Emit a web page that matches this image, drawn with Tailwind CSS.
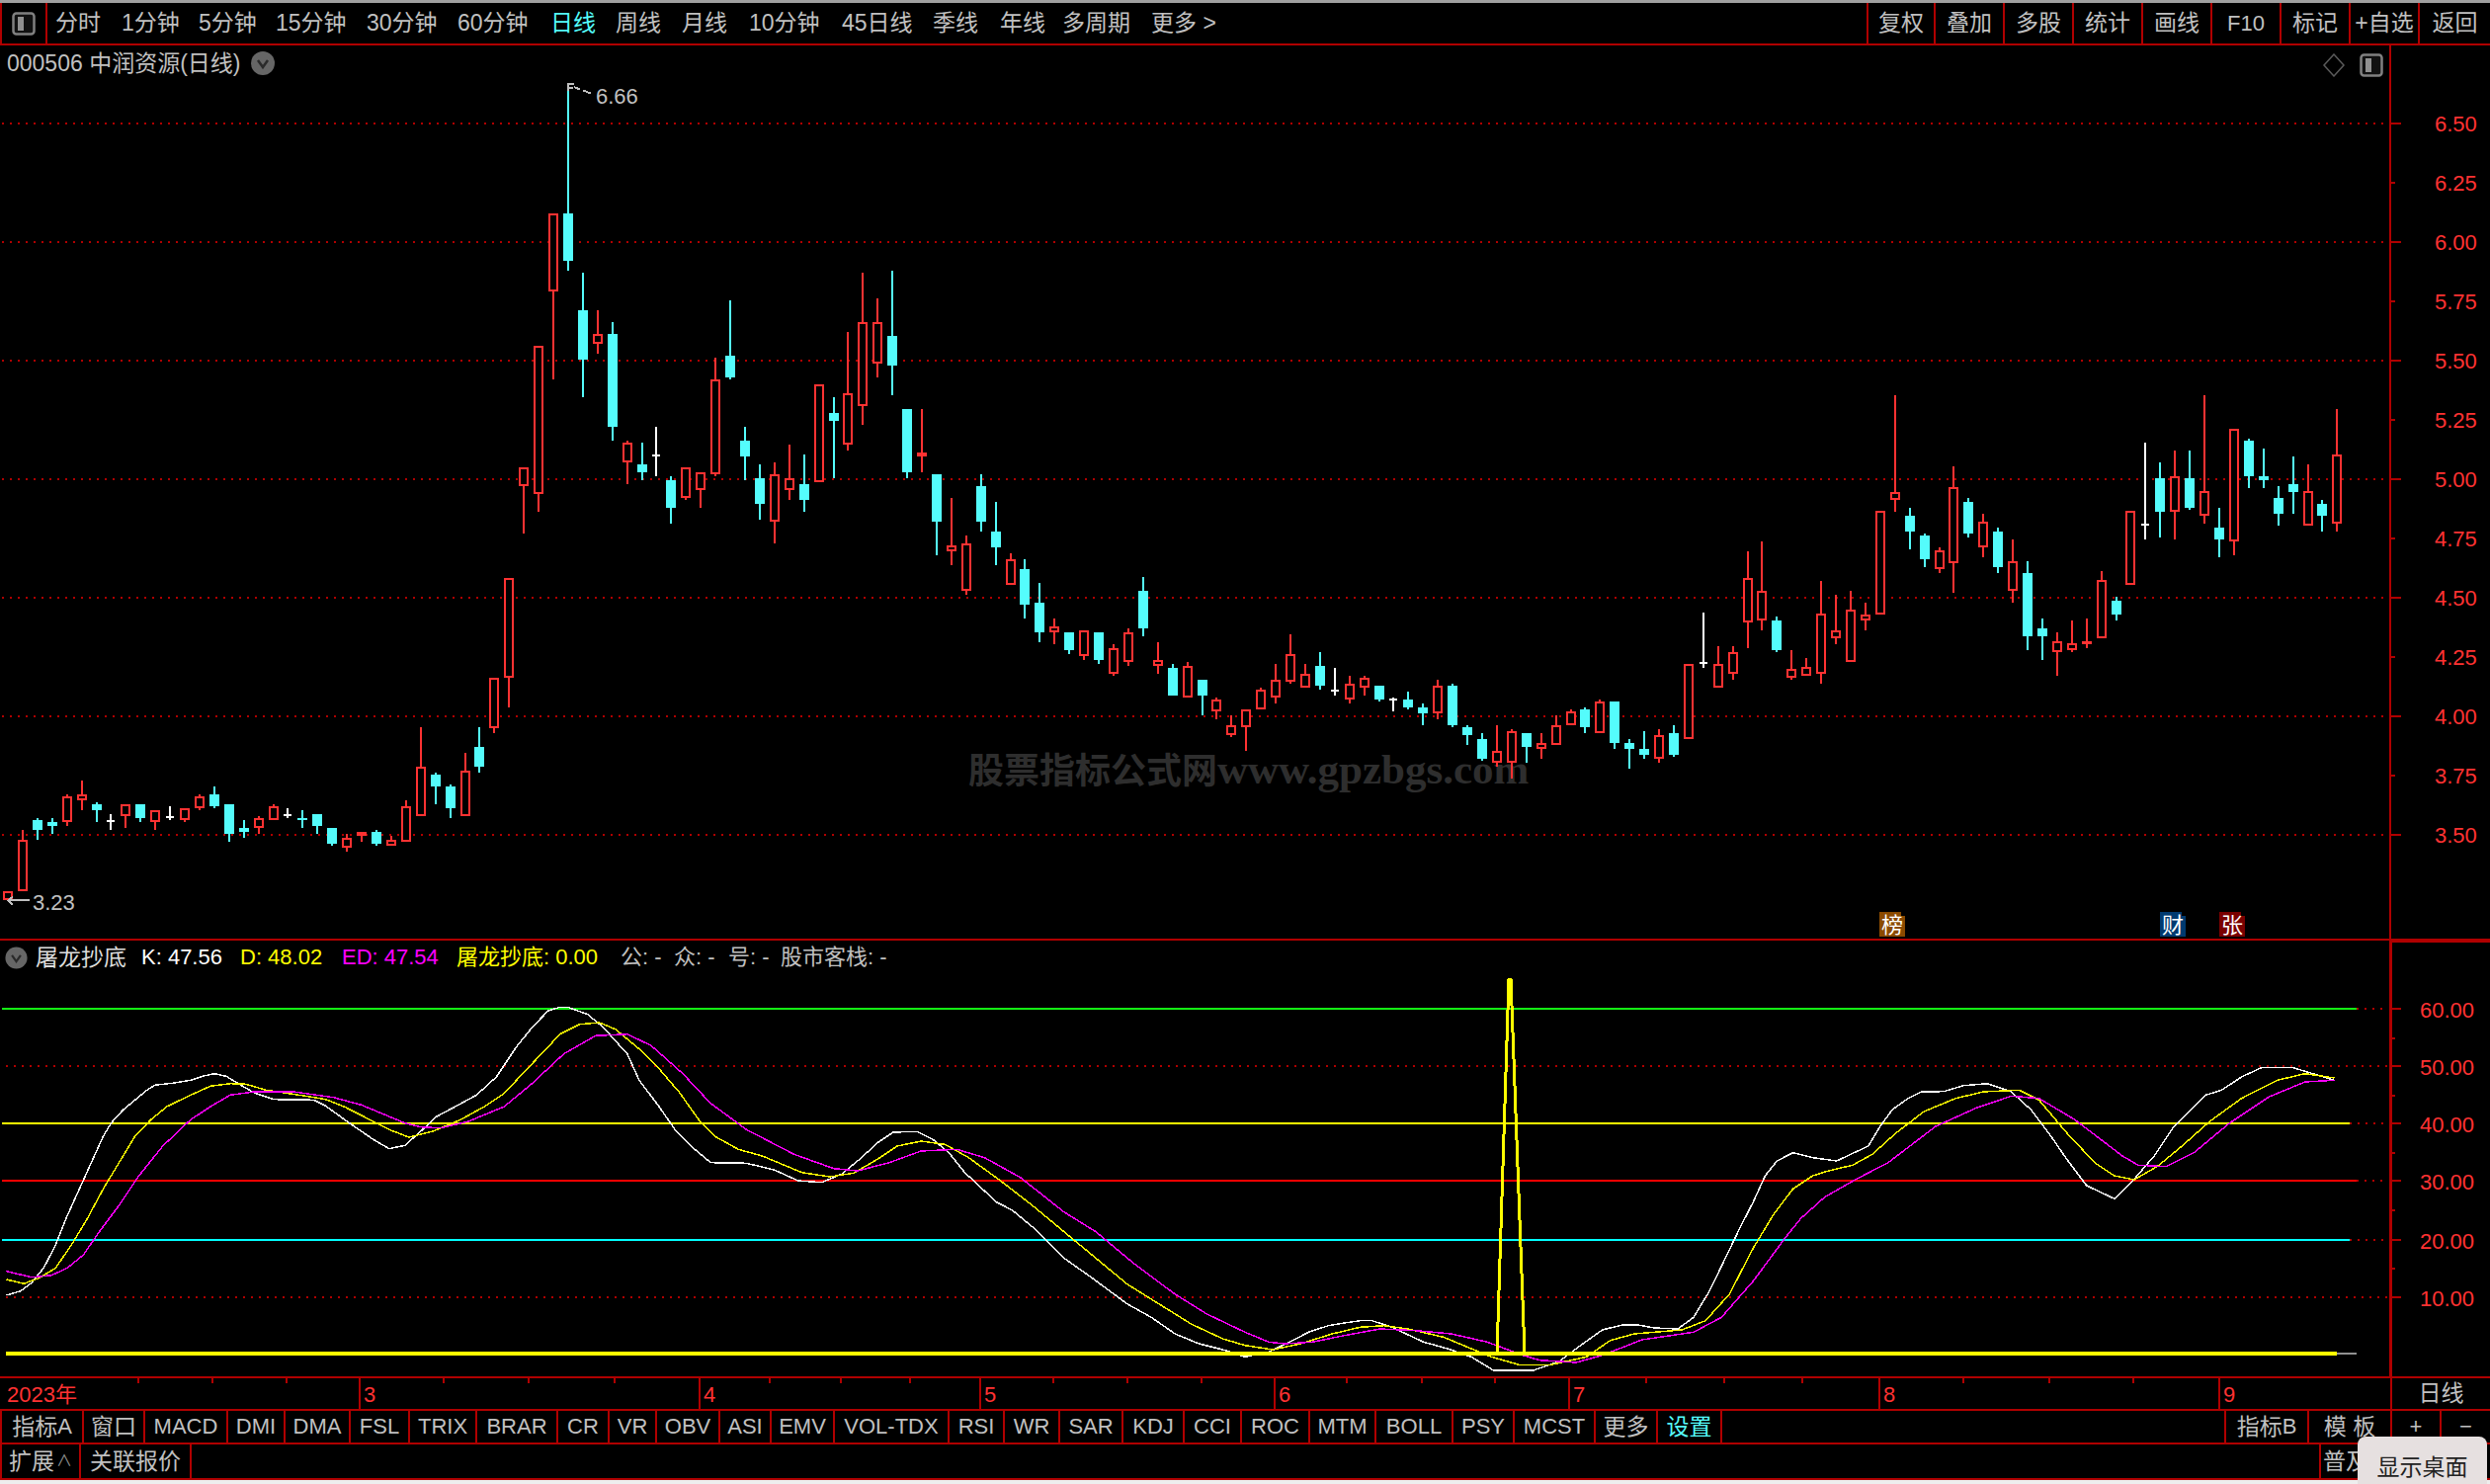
<!DOCTYPE html>
<html lang="zh-CN">
<head>
    <meta charset="UTF-8">
    <title>000506 中润资源 日线</title>
    <script src="https://cdn.jsdelivr.net/npm/@tailwindcss/browser@4"></script>
</head>
<body class="w-[2520px] h-[1502px] overflow-hidden flex flex-col bg-[#eeeeee] text-[#c0c0c0] text-[23px] leading-none font-['Liberation_Sans','Noto_Sans_CJK_SC',sans-serif]">
    <div class="h-[3px] bg-[#a0a0a0]"></div>

    <!-- top toolbar -->
    <div class="h-[43px] shrink-0 flex items-center bg-black border-b-2 border-[#b00000] whitespace-nowrap">
        <div class="w-[48px] h-full border-x-2 border-[#b00000] flex items-center justify-center">
            <svg width="24" height="24" viewBox="0 0 24 24"><rect x="1.5" y="1.5" width="21" height="21" rx="3" fill="#111" stroke="#808080" stroke-width="2.5"/><rect x="6" y="5" width="6" height="14" fill="#909090"/></svg>
        </div>
        <div class="w-[8px]"></div>
        <div class="w-[67px]">分时</div>
        <div class="w-[78px]">1分钟</div>
        <div class="w-[78px]">5分钟</div>
        <div class="w-[92px]">15分钟</div>
        <div class="w-[92px]">30分钟</div>
        <div class="w-[94px]">60分钟</div>
        <div class="w-[66px] text-[#54fcfc]">日线</div>
        <div class="w-[67px]">周线</div>
        <div class="w-[68px]">月线</div>
        <div class="w-[94px]">10分钟</div>
        <div class="w-[92px]">45日线</div>
        <div class="w-[68px]">季线</div>
        <div class="w-[63px]">年线</div>
        <div class="w-[90px]">多周期</div>
        <div class="w-[69px]">更多 &gt;</div>
        <div class="flex-1"></div>
        <div class="w-[68px] h-full flex items-center justify-center border-l-2 border-[#b00000]">复权</div>
        <div class="w-[70px] h-full flex items-center justify-center border-l-2 border-[#b00000]">叠加</div>
        <div class="w-[70px] h-full flex items-center justify-center border-l-2 border-[#b00000]">多股</div>
        <div class="w-[70px] h-full flex items-center justify-center border-l-2 border-[#b00000]">统计</div>
        <div class="w-[70px] h-full flex items-center justify-center border-l-2 border-[#b00000]">画线</div>
        <div class="w-[70px] h-full flex items-center justify-center border-l-2 border-[#b00000] text-[22px]">F10</div>
        <div class="w-[70px] h-full flex items-center justify-center border-l-2 border-[#b00000]">标记</div>
        <div class="w-[70px] h-full flex items-center justify-center border-l-2 border-[#b00000]">+自选</div>
        <div class="w-[73px] h-full flex items-center justify-center border-l-2 border-[#b00000]">返回</div>
    </div>

    <!-- price panel -->
    <div class="relative h-[904px] shrink-0 bg-black">
        <svg id="priceChart" class="block" width="2520" height="904" viewBox="0 46 2520 904" shape-rendering="crispEdges"></svg>
        <div class="absolute left-[7px] top-[5px] flex items-center gap-[10px] h-[26px] whitespace-nowrap">
            <span>000506 中润资源(日线)</span>
            <svg width="26" height="26" viewBox="0 0 26 26"><circle cx="13" cy="13" r="12" fill="#666"/><path d="M8 10l5 7 5-7" fill="none" stroke="#2a2a2a" stroke-width="2.5"/></svg>
        </div>
        <div class="absolute right-[108px] top-[8px] flex items-center gap-[14px]">
            <svg width="24" height="24" viewBox="0 0 24 24"><path d="M12 1l10 11-10 11L2 12z" fill="none" stroke="#5a5a5a" stroke-width="1.5"/></svg>
            <svg width="24" height="24" viewBox="0 0 24 24"><rect x="1.5" y="1.5" width="21" height="21" rx="3" fill="#111" stroke="#808080" stroke-width="2.5"/><rect x="6" y="5" width="6" height="14" fill="#909090"/></svg>
        </div>
    </div>
    <div class="h-[2px] shrink-0 bg-[#b00000]"></div>

    <!-- indicator panel -->
    <div class="relative h-[441px] shrink-0 bg-black">
        <svg id="kdjChart" class="block" width="2520" height="441" viewBox="0 952 2520 441" shape-rendering="crispEdges"></svg>
        <div class="absolute left-0 top-[5px] flex items-center h-[24px] whitespace-nowrap text-[22px]">
            <div class="w-[36px] pl-[5px]"><svg width="23" height="23" viewBox="0 0 26 26"><circle cx="13" cy="13" r="12.5" fill="#666"/><path d="M8 10l5 7 5-7" fill="none" stroke="#2a2a2a" stroke-width="2.5"/></svg></div>
            <div class="w-[107px] text-[23px] text-[#dddddd]">屠龙抄底</div>
            <div class="w-[100px] text-white">K: 47.56</div>
            <div class="w-[103px] text-[#ffff00]">D: 48.02</div>
            <div class="w-[116px] text-[#ff00ff]">ED: 47.54</div>
            <div class="w-[166px] text-[#ffff00]">屠龙抄底: 0.00</div>
            <div class="w-[54px]">公: -</div>
            <div class="w-[55px]">众: -</div>
            <div class="w-[53px]">号: -</div>
            <div>股市客栈: -</div>
        </div>
    </div>
    <div class="h-[2px] shrink-0 bg-[#b00000]"></div>

    <!-- date axis -->
    <div class="relative h-[31px] shrink-0 flex bg-black text-[#ff3232] text-[22px]">
        <div class="w-[363px] pl-[7px] pt-[6px]">2023年</div>
        <div class="w-[344px] border-l-2 border-[#b00000] pl-[3px] pt-[6px]">3</div>
        <div class="w-[284px] border-l-2 border-[#b00000] pl-[3px] pt-[6px]">4</div>
        <div class="w-[298px] border-l-2 border-[#b00000] pl-[3px] pt-[6px]">5</div>
        <div class="w-[298px] border-l-2 border-[#b00000] pl-[3px] pt-[6px]">6</div>
        <div class="w-[314px] border-l-2 border-[#b00000] pl-[3px] pt-[6px]">7</div>
        <div class="w-[344px] border-l-2 border-[#b00000] pl-[3px] pt-[6px]">8</div>
        <div class="w-[174px] border-l-2 border-[#b00000] pl-[3px] pt-[6px]">9</div>
        <div class="flex-1 border-l-2 border-[#b00000] flex items-center justify-center text-[23px] text-[#c0c0c0]">日线</div>
        <svg id="dateTicks" class="absolute left-0 top-0" width="2419" height="6" shape-rendering="crispEdges"></svg>
    </div>
    <div class="h-[2px] shrink-0 bg-[#b00000]"></div>

    <!-- indicator buttons -->
    <div class="h-[34px] shrink-0 flex bg-black text-[22px] whitespace-nowrap border-b-2 border-[#b00000] border-l-2">
        <div class="w-[83px] flex items-center justify-center border-r-2 border-[#b00000]"><span class="text-[23px]">指标</span>A</div>
        <div class="w-[62px] flex items-center justify-center border-r-2 border-[#b00000] text-[23px]">窗口</div>
        <div class="w-[84px] flex items-center justify-center border-r-2 border-[#b00000]">MACD</div>
        <div class="w-[58px] flex items-center justify-center border-r-2 border-[#b00000]">DMI</div>
        <div class="w-[66px] flex items-center justify-center border-r-2 border-[#b00000]">DMA</div>
        <div class="w-[60px] flex items-center justify-center border-r-2 border-[#b00000]">FSL</div>
        <div class="w-[68px] flex items-center justify-center border-r-2 border-[#b00000]">TRIX</div>
        <div class="w-[82px] flex items-center justify-center border-r-2 border-[#b00000]">BRAR</div>
        <div class="w-[52px] flex items-center justify-center border-r-2 border-[#b00000]">CR</div>
        <div class="w-[48px] flex items-center justify-center border-r-2 border-[#b00000]">VR</div>
        <div class="w-[64px] flex items-center justify-center border-r-2 border-[#b00000]">OBV</div>
        <div class="w-[52px] flex items-center justify-center border-r-2 border-[#b00000]">ASI</div>
        <div class="w-[64px] flex items-center justify-center border-r-2 border-[#b00000]">EMV</div>
        <div class="w-[116px] flex items-center justify-center border-r-2 border-[#b00000]">VOL-TDX</div>
        <div class="w-[56px] flex items-center justify-center border-r-2 border-[#b00000]">RSI</div>
        <div class="w-[56px] flex items-center justify-center border-r-2 border-[#b00000]">WR</div>
        <div class="w-[64px] flex items-center justify-center border-r-2 border-[#b00000]">SAR</div>
        <div class="w-[62px] flex items-center justify-center border-r-2 border-[#b00000]">KDJ</div>
        <div class="w-[58px] flex items-center justify-center border-r-2 border-[#b00000]">CCI</div>
        <div class="w-[69px] flex items-center justify-center border-r-2 border-[#b00000]">ROC</div>
        <div class="w-[67px] flex items-center justify-center border-r-2 border-[#b00000]">MTM</div>
        <div class="w-[78px] flex items-center justify-center border-r-2 border-[#b00000]">BOLL</div>
        <div class="w-[62px] flex items-center justify-center border-r-2 border-[#b00000]">PSY</div>
        <div class="w-[82px] flex items-center justify-center border-r-2 border-[#b00000]">MCST</div>
        <div class="w-[63px] flex items-center justify-center border-r-2 border-[#b00000] text-[23px]">更多</div>
        <div class="w-[65px] flex items-center justify-center border-r-2 border-[#b00000] text-[23px] text-[#54fcfc]">设置</div>
        <div class="flex-1"></div>
        <div class="w-[84px] flex items-center justify-center border-l-2 border-[#b00000]"><span class="text-[23px]">指标</span>B</div>
        <div class="w-[84px] flex items-center justify-center border-l-2 border-[#b00000] text-[23px]">模 板</div>
        <div class="w-[50px] flex items-center justify-center border-l-2 border-[#b00000]">+</div>
        <div class="w-[51px] flex items-center justify-center border-l-2 border-[#b00000]">−</div>
    </div>

    <!-- bottom row -->
    <div class="h-[36px] shrink-0 flex bg-black text-[23px] whitespace-nowrap border-b-2 border-[#b00000] border-l-2">
        <div class="w-[80px] flex items-center justify-center gap-[2px] border-r-2 border-[#b00000]">扩展<span class="text-[16px] text-[#909090]">∧</span></div>
        <div class="w-[112px] flex items-center justify-center border-r-2 border-[#b00000]">关联报价</div>
        <div class="flex-1"></div>
        <div class="w-[173px] flex items-center pl-[2px] border-l-2 border-[#b00000]">普及</div>
    </div>

    <div class="absolute left-[2386px] top-[1454px] w-[131px] h-[48px] rounded-t-[8px] bg-[#e6e0e0] text-[#222222] flex items-center justify-center pt-[10px] font-['Noto_Sans_CJK_SC',sans-serif]">显示桌面</div>

    <script>
        const SVG_FONT = "'Liberation Sans','Noto Sans CJK SC',sans-serif";
        const RED_LINE = '#b00000';
        const UP = '#ff3232';
        const DOWN = '#54fcfc';

        // type, high, body top, body bottom, low (all in page pixels)
        // r = hollow up, R = solid up, c = down, w = doji
        const candles = [
            ['r',902,902,911,911],['r',840,850,902,902],['c',828,830,840,850],['c',828,832,836,844],['r',804,806,832,836],
            ['r',790,804,810,820],['c',812,814,820,832],['w',824,831,831,840],['r',814,814,826,838],['c',814,814,828,832],
            ['r',820,820,832,840],['w',816,827,827,830],['r',818,818,830,832],['r',804,806,818,820],['c',796,804,816,818],
            ['c',814,814,844,852],['c',830,838,842,848],['r',826,828,838,844],['r',814,816,830,830],['w',818,825,825,828],
            ['c',820,828,830,838],['c',824,824,836,844],['c',838,838,854,856],['r',844,848,858,862],['R',842,842,846,852],
            ['c',840,842,854,856],['r',846,850,856,856],['r',810,816,852,852],['r',736,776,826,826],['c',782,784,796,814],
            ['c',794,796,818,828],['r',762,780,826,826],['c',736,756,776,782],['r',686,686,737,742],['r',585,585,686,716],
            ['r',473,473,492,540],['r',350,350,500,518],['r',216,216,295,384],['c',84,216,264,274],['c',276,314,364,402],
            ['r',314,338,348,358],['c',326,338,432,446],['r',446,448,468,490],['c',448,470,478,486],['w',432,461,461,482],
            ['c',482,486,514,530],['r',473,473,504,506],['r',478,478,496,514],['r',362,384,480,482],['c',304,360,382,384],
            ['c',432,446,462,486],['c',470,484,510,526],['r',468,480,528,550],['r',450,484,496,506],['c',460,490,506,518],
            ['r',389,389,488,488],['c',402,418,426,484],['r',336,398,450,456],['r',276,326,411,430],['r',302,326,368,382],
            ['c',274,340,370,400],['c',414,414,478,484],['R',414,458,462,478],['c',480,480,528,562],['r',504,552,558,572],
            ['r',542,550,598,602],['c',480,492,528,538],['c',508,538,554,572],['r',560,566,592,592],['c',566,576,612,626],
            ['c',590,610,640,650],['r',626,634,640,652],['c',640,640,658,662],['r',638,638,664,668],['c',640,640,668,672],
            ['r',652,656,682,684],['r',636,640,670,674],['c',584,598,636,644],['r',650,668,674,682],['c',672,676,704,704],
            ['r',670,674,706,706],['c',688,688,704,724],['r',706,708,720,728],['r',724,734,744,746],['r',718,718,736,760],
            ['r',696,698,718,718],['r',672,688,706,712],['r',642,662,690,692],['r',672,682,696,696],['c',660,674,694,698],
            ['w',676,699,699,704],['r',684,692,708,712],['r',684,686,696,704],['c',694,694,708,710],['w',706,708,708,720],
            ['c',700,708,716,718],['c',712,716,722,734],['r',688,694,722,728],['c',692,694,734,736],['c',734,736,744,754],
            ['c',742,748,768,770],['r',734,760,772,776],['r',738,740,772,788],['c',742,742,756,772],['r',742,752,758,768],
            ['r',724,734,754,754],['r',718,720,734,734],['c',716,718,736,742],['r',708,710,742,742],['c',710,710,752,758],
            ['c',748,752,758,778],['c',740,758,764,768],['r',738,744,768,772],['c',734,742,764,766],['r',672,672,748,748],
            ['w',620,671,671,676],['r',654,672,696,696],['r',654,660,682,688],['r',558,585,630,656],['r',548,598,628,638],
            ['c',624,628,658,660],['r',658,677,686,688],['r',666,675,684,684],['r',588,621,682,692],['r',602,638,646,652],
            ['r',598,617,670,670],['r',610,622,628,638],['r',517,517,622,622],['r',400,498,506,518],['c',514,522,538,556],
            ['c',540,542,566,574],['r',554,557,576,580],['r',472,493,570,600],['c',504,508,540,544],['r',520,528,554,564],
            ['c',534,538,574,580],['r',546,568,598,610],['c',568,580,644,658],['c',626,636,644,668],['r',640,649,660,684],
            ['r',628,651,658,660],['R',626,649,652,656],['r',578,587,646,646],['c',604,608,622,628],['r',517,517,592,592],
            ['w',448,531,531,546],['c',468,484,518,544],['r',456,482,518,546],['c',456,484,514,516],['r',400,497,522,530],
            ['c',514,534,546,564],['r',434,434,548,562],['c',444,446,482,494],['c',454,482,486,494],['c',492,504,520,532],
            ['c',462,490,498,520],['r',470,497,532,532],['c',506,510,522,538],['r',414,460,530,538]
        ];

        const rect = (x, y, w, h, fill) => `<rect x="${x}" y="${y}" width="${w}" height="${h}" fill="${fill}"/>`;
        const label = (x, y, text, fill, size = 22) =>
            `<text x="${x}" y="${y}" fill="${fill}" font-size="${size}" dominant-baseline="central" font-family="${SVG_FONT}" text-rendering="auto">${text}</text>`;
        const dots = (y, x1, x2) =>
            `<line x1="${x1}" y1="${y}" x2="${x2}" y2="${y}" stroke="${RED_LINE}" stroke-width="2" stroke-dasharray="2 6"/>`;

        function drawPrice() {
            let out = '';
            // grid + axis
            const levels = ['6.50','6.25','6.00','5.75','5.50','5.25','5.00','4.75','4.50','4.25','4.00','3.75','3.50'];
            levels.forEach((text, i) => {
                const y = 125 + i * 60;
                if (i % 2 === 0) {
                    out += dots(y, 2, 2418);
                    out += rect(2418, y - 1, 12, 2, RED_LINE);
                } else {
                    out += rect(2418, y - 1, 6, 2, RED_LINE);
                }
                out += label(2464, y, text, UP);
            });
            out += rect(2418, 46, 2, 904, RED_LINE);

            // watermark sits under the candles
            out += `<text x="980" y="793" fill="#2e2e2e" font-weight="700" font-family="'Liberation Serif','Noto Sans CJK SC',serif" font-size="36">股票指标公式网<tspan font-size="43">www.gpzbgs.com</tspan></text>`;

            candles.forEach(([type, high, top, bottom, low], i) => {
                const x = Math.round(8 + i * 14.92);
                if (type === 'w') {
                    out += rect(x - 1, high, 2, low - high, '#ffffff');
                    out += rect(x - 4, top - 1, 8, 2, '#ffffff');
                    return;
                }
                const color = type === 'c' ? DOWN : UP;
                out += rect(x - 1, high, 2, low - high, color);
                out += rect(x - 5, top, 10, Math.max(bottom - top, 2), color);
                if (type === 'r' && bottom - top > 4) out += rect(x - 3, top + 2, 6, bottom - top - 4, '#000');
            });

            // high / low flags
            out += `<path d="M575 92V84.500H581M575 88.500H580M581 88l6 2.500M590 91.500l8 3" fill="none" stroke="#c0c0c0" stroke-width="2"/>`;
            out += label(603, 97, '6.66', '#c0c0c0');
            out += `<path d="M8 911H30M8 911l5-3M8 911l5 5" fill="none" stroke="#c0c0c0" stroke-width="2"/>`;
            out += label(33, 913, '3.23', '#c0c0c0');

            // news badges
            [[1902, '榜', '#8a4a00'], [2186, '财', '#003a70'], [2246, '张', '#7a0000']].forEach(([x, text, fill]) => {
                out += `<path d="M${x} 923H${x + 22}V927H${x + 26}V948H${x}z" fill="${fill}"/>`;
                out += `<text x="${x + 13}" y="936" fill="#fff" font-size="22" text-anchor="middle" dominant-baseline="central" font-family="${SVG_FONT}">${text}</text>`;
            });
            document.getElementById('priceChart').innerHTML = out;
        }

        // traced curves: x is scaled by 1.2444, y by 3, y origin 990
        const scaleCurve = (left, right) => {
            const pts = [];
            for (let i = 0; i < left.length; i += 2) pts.push([left[i] / 1.2444, 990 + left[i + 1] / 3]);
            for (let i = 0; i < right.length; i += 2) pts.push([1260 + right[i] / 1.2444, 990 + right[i + 1] / 3]);
            return pts.map(p => p[0].toFixed(1) + ',' + p[1].toFixed(1)).join(' ');
        };

        const kLine = scaleCurve(
            [8,963,26,950,40,925,55,880,70,810,85,720,100,640,115,560,130,480,140,440,155,400,170,370,185,340,195,325,220,318,240,310,255,298,270,290,285,298,300,320,320,348,345,368,395,370,410,388,440,440,470,490,490,518,510,508,530,465,550,420,575,388,600,355,625,300,650,210,670,150,690,100,705,88,715,88,740,110,760,150,790,230,805,310,830,390,850,460,875,520,895,560,940,562,975,582,1005,615,1035,620,1060,595,1085,545,1105,500,1125,468,1155,466,1175,490,1195,530,1215,590,1255,680,1275,705,1305,765,1340,850,1375,910,1420,990,1450,1030,1480,1080,1510,1110,1540,1128,1568,1150],
            [30,1135,60,1100,80,1075,105,1055,125,1047,145,1040,160,1040,185,1060,225,1105,255,1125,285,1150,313,1191,363,1191,395,1165,420,1120,450,1068,475,1053,495,1053,515,1062,545,1065,565,1030,585,950,605,850,625,750,640,680,655,600,670,555,690,530,715,545,745,555,785,510,800,450,815,400,835,365,852,345,880,344,905,326,935,320,965,345,990,400,1015,480,1035,550,1060,630,1095,670,1120,610,1145,540,1170,450,1210,355,1230,340,1255,300,1280,272,1320,272,1345,290,1372,310]
        );
        const dLine = scaleCurve(
            [8,915,30,928,50,910,70,880,90,810,110,730,130,640,150,560,170,480,190,430,210,390,240,355,265,328,290,320,310,322,335,340,380,356,410,368,435,392,470,435,490,460,515,483,545,465,580,430,610,390,635,350,660,285,690,210,705,170,730,140,755,135,775,155,805,215,830,275,855,345,880,430,900,480,930,520,960,540,1010,590,1045,603,1075,592,1105,550,1130,510,1160,495,1190,505,1220,545,1260,615,1300,690,1340,770,1380,850,1420,930,1460,990,1500,1050,1540,1095,1568,1115],
            [35,1128,70,1110,110,1080,145,1060,175,1055,205,1065,250,1090,285,1125,310,1150,347,1175,383,1175,430,1150,460,1100,490,1080,550,1068,580,1040,610,960,640,820,665,720,690,640,715,600,735,585,765,568,790,535,820,470,855,405,895,365,930,345,975,340,1000,370,1035,470,1070,560,1095,600,1120,612,1150,570,1180,510,1215,435,1255,365,1300,310,1335,290,1372,303]
        );
        const edLine = scaleCurve(
            [8,890,40,908,65,902,85,880,105,840,125,770,150,690,175,600,205,510,240,430,265,390,290,355,320,345,370,345,420,362,455,385,510,440,530,452,555,455,590,435,635,390,670,320,710,230,750,175,790,170,820,205,860,290,895,380,940,460,1000,535,1050,578,1080,585,1120,560,1160,525,1205,520,1240,545,1285,605,1340,710,1380,770,1430,870,1480,960,1520,1020,1568,1075],
            [30,1105,50,1110,85,1105,125,1085,170,1065,215,1070,260,1080,305,1105,350,1145,371,1160,417,1167,450,1145,500,1098,565,1075,600,1030,640,920,680,790,700,730,730,665,770,610,810,560,870,450,920,395,965,358,1000,365,1045,430,1105,540,1125,568,1160,572,1195,530,1240,440,1290,360,1335,315,1372,310]
        );

        function drawKdj() {
            let out = '';
            const poly = (points, color, width) =>
                `<polyline points="${points}" fill="none" stroke="${color}" stroke-width="${width}"/>`;

            out += dots(1079, 6, 2418) + dots(1313, 6, 2418);
            [[1021, '#14f014', 2385], [1137, '#ffff00', 2378], [1195, '#ff0000', 2385], [1255, '#00ffff', 2378]].forEach(([y, color, end]) => {
                out += rect(2, y - 1, end - 2, 2, color);
                out += dots(y, end, 2412);
            });

            out += poly(kLine, '#ffffff', 1.5) + poly(dLine, '#ffff00', 1.5) + poly(edLine, '#ff00ff', 1.5);

            // signal spike and base line
            out += rect(2365, 1369, 20, 2, '#909090');
            out += rect(6, 1368, 2359, 4, '#ffff00');
            out += poly('1515,1370 1527,991 1529,991 1543,1370', '#ffff00', 3);

            // axis
            [['60.00', 1021], ['50.00', 1079], ['40.00', 1137], ['30.00', 1195], ['20.00', 1255], ['10.00', 1313]].forEach(([text, y]) => {
                out += rect(2418, y - 1, 12, 2, RED_LINE);
                out += label(2449, y + 1, text, UP);
            });
            [1051, 1109, 1167, 1225, 1284].forEach(y => { out += rect(2418, y - 1, 6, 2, RED_LINE); });
            out += rect(2418, 952, 3, 441, RED_LINE);
            out += rect(2418, 952, 102, 2, RED_LINE);
            document.getElementById('kdjChart').innerHTML = out;
        }

        function drawTicks() {
            const ticks = [139, 214, 289, 448, 534, 621, 778, 850, 920, 1065, 1140, 1215, 1362, 1438, 1512, 1665, 1744, 1823, 1986, 2073, 2158];
            document.getElementById('dateTicks').innerHTML = ticks.map(x => rect(x, 0, 2, 5, RED_LINE)).join('');
        }

        drawPrice();
        drawKdj();
        drawTicks();
    </script>
</body>
</html>
